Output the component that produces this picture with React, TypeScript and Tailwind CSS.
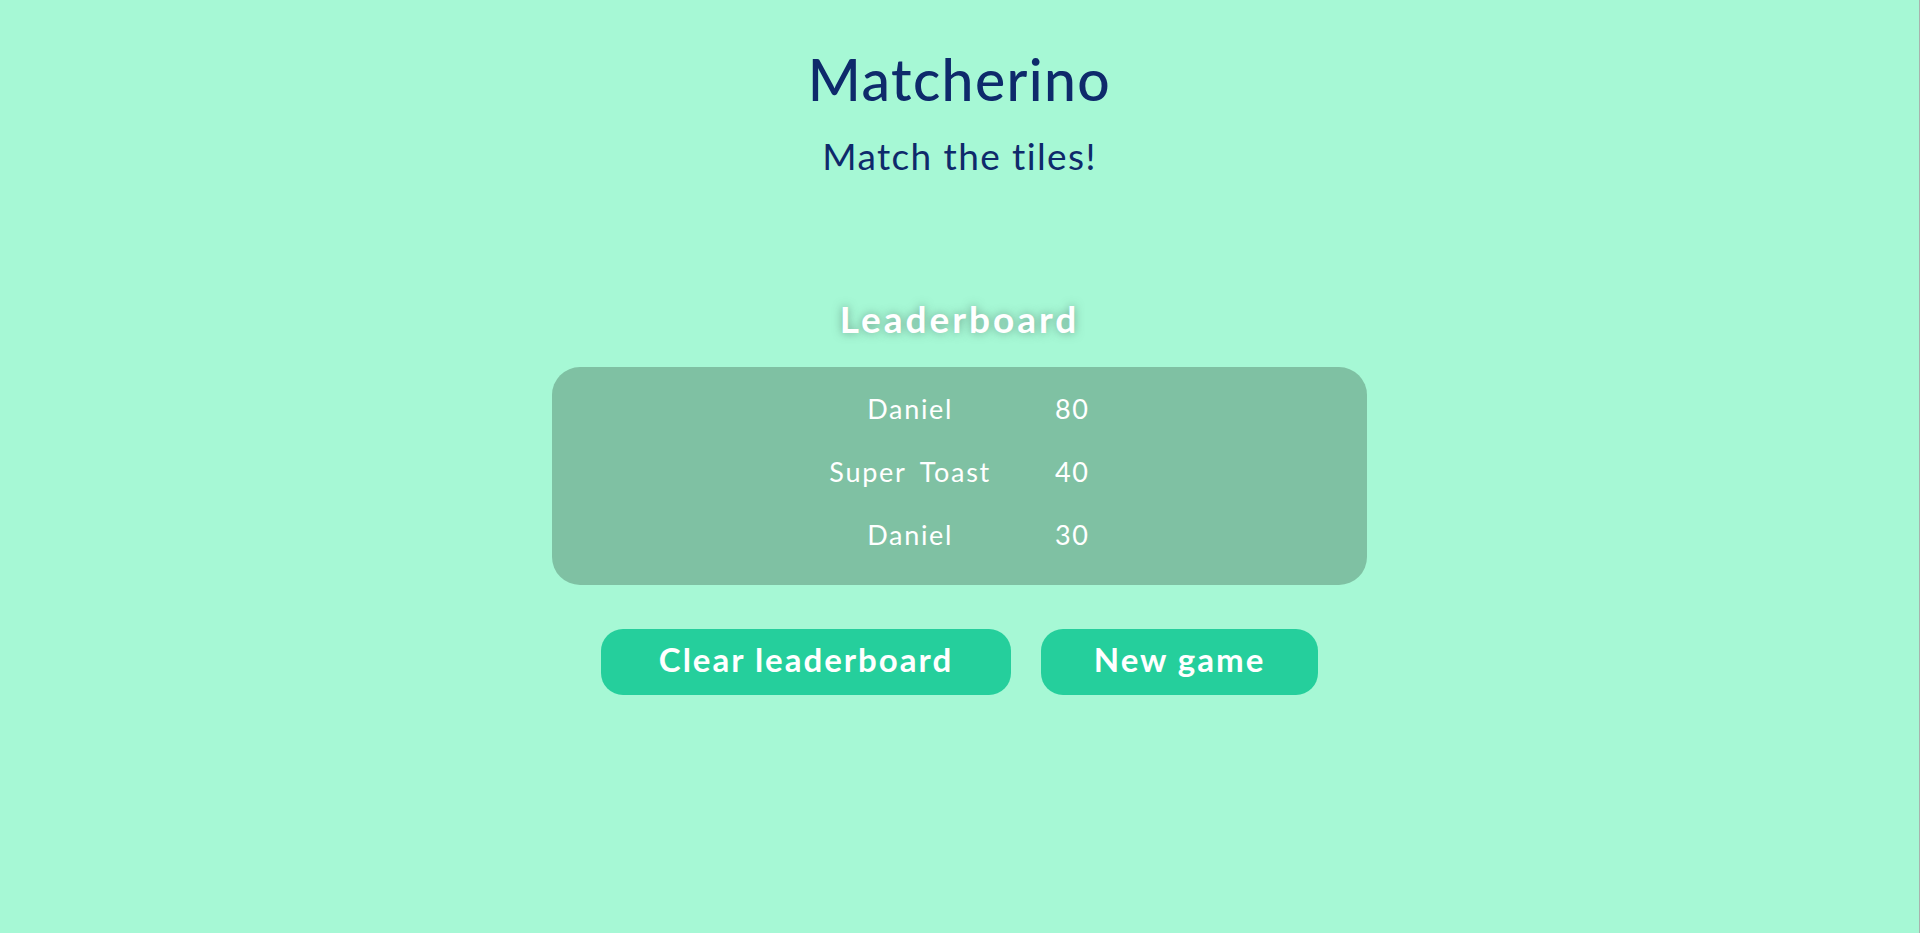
import React from "react";

const scores = [
    { name: "Daniel", score: 80 },
    { name: "Super Toast", score: 40 },
    { name: "Daniel", score: 30 },
];

export default function App() {
    return (
        <div className="min-h-[933px] w-full bg-[#a6f8d5] border-r border-[#a9b3ae] flex flex-col items-center font-['Lato',sans-serif]">
            <h1 className="mt-[51px] text-[57px] leading-none font-medium tracking-[1.4px] text-[#0e2a6b]">Matcherino</h1>
            <p className="mt-[29px] text-[37px] leading-none tracking-[1.4px] text-[#0e2a6b]">Match the tiles!</p>

            <h2 className="mt-[126px] text-[37px] leading-none font-bold tracking-[3px] text-white [text-shadow:0_0_10px_rgba(60,90,80,0.55)]">
                Leaderboard
            </h2>

            <div className="mt-[30px] w-[815px] h-[218px] rounded-[28px] bg-[#7fc1a3] pt-[28px] flex justify-center">
                <div className="grid grid-cols-[auto_auto] gap-y-[36px] h-fit text-[27px] leading-none tracking-[1.7px] [word-spacing:6px] text-white">
                    {scores.map((s, i) => (
                        <React.Fragment key={i}>
                            <div className="px-8 text-center">{s.name}</div>
                            <div className="px-8 text-center">{s.score}</div>
                        </React.Fragment>
                    ))}
                </div>
            </div>

            <div className="mt-[44px] flex gap-[30px]">
                <button className="w-[410px] h-[66px] pb-[6px] rounded-[22px] bg-[#25cf9c] text-white text-[33px] leading-none font-bold tracking-[2px] flex items-center justify-center">
                    Clear leaderboard
                </button>
                <button className="w-[277px] h-[66px] pb-[6px] rounded-[22px] bg-[#25cf9c] text-white text-[33px] leading-none font-bold tracking-[2px] flex items-center justify-center">
                    New game
                </button>
            </div>
        </div>
    );
}
